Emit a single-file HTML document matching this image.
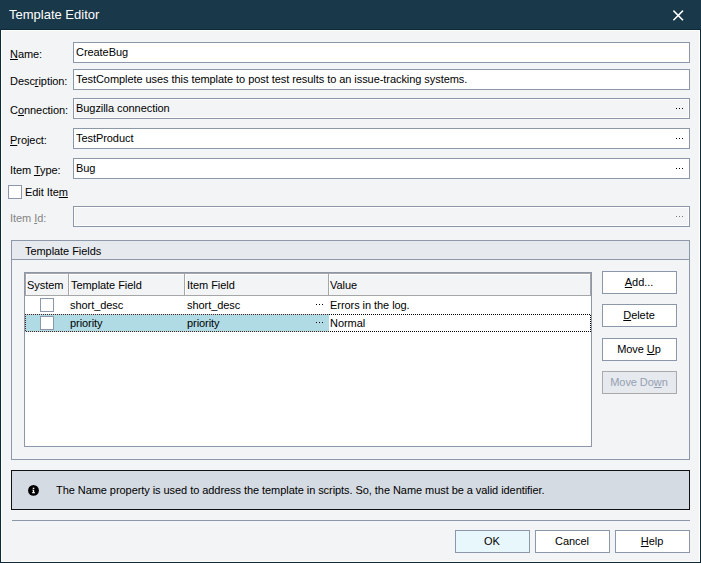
<!DOCTYPE html>
<html><head><meta charset="utf-8">
<style>
*{margin:0;padding:0;box-sizing:border-box}
html,body{width:701px;height:563px;overflow:hidden;background:#f3f4f6}
body{position:relative;font-family:"Liberation Sans",sans-serif;font-size:11px;color:#000;line-height:13px;letter-spacing:-0.06px}
.a{position:absolute;white-space:pre}
#title{position:absolute;left:0;top:0;width:701px;height:29px;background:#193849}
#tline{position:absolute;left:0;top:29px;width:701px;height:1px;background:#0d2a3c}
#fl{position:absolute;left:0;top:29px;width:1px;height:534px;background:#0d2a3c}
#fr{position:absolute;left:700px;top:29px;width:1px;height:534px;background:#0d2a3c}
#fb{position:absolute;left:0;top:562px;width:701px;height:1px;background:#0d2a3c}
#wl{position:absolute;left:1px;top:30px;width:1px;height:532px;background:#fff}
#wr{position:absolute;left:699px;top:30px;width:1px;height:532px;background:#fff}
#wt{position:absolute;left:1px;top:30px;width:699px;height:1px;background:#fff}
#wb{position:absolute;left:1px;top:561px;width:699px;height:1px;background:#fff}
.tb{position:absolute;left:73px;width:617px;height:21px;border:1px solid #8c97a9;background:#fff}
.ro{background:#f3f4f6;box-shadow:inset 0 0 0 1px #fff}
.dots{position:absolute;left:676px;width:7px;height:1px}
.dots i{position:absolute;top:0;width:1px;height:1px;background:#000}
u{text-decoration:underline;text-underline-offset:1px;text-decoration-thickness:1px;text-decoration-skip-ink:none}
.btn{position:absolute;width:75px;height:23px;border:1px solid #8c97a9;background:#fff;text-align:center;line-height:20px;padding-right:1px}
.cb{position:absolute;width:14px;height:14px;border:1px solid #8c97a9;background:#fff}
</style></head><body>
<div id="title"></div>
<div class="a" style="left:9px;top:7px;font-size:13px;letter-spacing:0;line-height:16px;color:#fff">Template Editor</div>
<svg style="position:absolute;left:672px;top:9px" width="12" height="12" viewBox="0 0 12 12"><path d="M1.4 1.6L11 11.2M11 1.6L1.4 11.2" stroke="#fff" stroke-width="1.5"/></svg>
<div id="tline"></div><div id="fl"></div><div id="fr"></div><div id="fb"></div>
<div id="wl"></div><div id="wr"></div><div id="wt"></div><div id="wb"></div>

<!-- form rows -->
<div class="a" style="left:10px;top:48px"><u>N</u>ame:</div>
<div class="tb" style="top:42px"></div>
<div class="a" style="left:76px;top:46px">CreateBug</div>

<div class="a" style="left:10px;top:75px">Desc<u>r</u>iption:</div>
<div class="tb" style="top:69px"></div>
<div class="a" style="left:76px;top:73px">TestComplete uses this template to post test results to an issue-tracking systems.</div>

<div class="a" style="left:10px;top:104px">C<u>o</u>nnection:</div>
<div class="tb ro" style="top:98px"></div>
<div class="a" style="left:76px;top:102px">Bugzilla connection</div>
<div class="dots" style="top:108px"><i style="left:0"></i><i style="left:3px"></i><i style="left:6px"></i></div>

<div class="a" style="left:10px;top:134px"><u>P</u>roject:</div>
<div class="tb" style="top:128px"></div>
<div class="a" style="left:76px;top:132px">TestProduct</div>
<div class="dots" style="top:138px"><i style="left:0"></i><i style="left:3px"></i><i style="left:6px"></i></div>

<div class="a" style="left:10px;top:164px">Item <u>T</u>ype:</div>
<div class="tb" style="top:158px"></div>
<div class="a" style="left:76px;top:162px">Bug</div>
<div class="dots" style="top:168px"><i style="left:0"></i><i style="left:3px"></i><i style="left:6px"></i></div>

<div class="cb" style="left:8px;top:185px"></div>
<div class="a" style="left:25px;top:186px">Edit Ite<u>m</u></div>

<div class="a" style="left:10px;top:212px;color:#858585">Item <u>I</u>d:</div>
<div class="tb ro" style="top:206px"></div>
<div class="dots" style="top:216px"><i style="left:0;background:#777"></i><i style="left:3px;background:#777"></i><i style="left:6px;background:#777"></i></div>


<!-- group box -->
<div style="position:absolute;left:11px;top:240px;width:679px;height:220px;border:1px solid #8c97a9;background:#f3f4f6"></div>
<div style="position:absolute;left:12px;top:241px;width:677px;height:18px;background:#e6e9ee;border-bottom:1px solid #8c97a9;box-sizing:content-box"></div>
<div class="a" style="left:25px;top:245px">Template Fields</div>

<!-- grid -->
<div style="position:absolute;left:24px;top:272px;width:568px;height:175px;border:1px solid #8c97a9;background:#fff"></div>
<div style="position:absolute;left:25px;top:273px;width:566px;height:23px;border:1px solid #a6a6a6;background:#f3f4f6;box-shadow:inset 1px 1px 0 #fff"></div>
<div style="position:absolute;left:68px;top:274px;width:1px;height:21px;background:#a6a6a6"></div>
<div style="position:absolute;left:69px;top:274px;width:1px;height:21px;background:#fff"></div>
<div style="position:absolute;left:184px;top:274px;width:1px;height:21px;background:#a6a6a6"></div>
<div style="position:absolute;left:185px;top:274px;width:1px;height:21px;background:#fff"></div>
<div style="position:absolute;left:328px;top:274px;width:1px;height:21px;background:#a6a6a6"></div>
<div style="position:absolute;left:329px;top:274px;width:1px;height:21px;background:#fff"></div>
<div class="a" style="left:27px;top:279px">System</div>
<div class="a" style="left:71px;top:279px">Template Field</div>
<div class="a" style="left:187px;top:279px">Item Field</div>
<div class="a" style="left:330px;top:279px">Value</div>

<div class="cb" style="left:40px;top:298px"></div>
<div class="a" style="left:70px;top:299px">short_desc</div>
<div class="a" style="left:187px;top:299px">short_desc</div>
<div style="position:absolute;left:316px;top:304px;width:1px;height:1px;background:#000"></div>
<div style="position:absolute;left:319px;top:304px;width:1px;height:1px;background:#000"></div>
<div style="position:absolute;left:322px;top:304px;width:1px;height:1px;background:#000"></div>
<div class="a" style="left:330px;top:299px">Errors in the log.</div>

<div style="position:absolute;left:25px;top:314px;width:304px;height:18px;background:#b0dbe4"></div>
<div class="cb" style="left:40px;top:316px"></div>
<div class="a" style="left:70px;top:317px">priority</div>
<div class="a" style="left:187px;top:317px">priority</div>
<div style="position:absolute;left:316px;top:322px;width:1px;height:1px;background:#000"></div>
<div style="position:absolute;left:319px;top:322px;width:1px;height:1px;background:#000"></div>
<div style="position:absolute;left:322px;top:322px;width:1px;height:1px;background:#000"></div>
<div class="a" style="left:330px;top:317px">Normal</div>

<svg style="position:absolute;left:0;top:0" width="701" height="563">
<defs>
<pattern id="pb" patternUnits="userSpaceOnUse" width="2" height="2"><rect x="1" y="0" width="1" height="1" fill="#4f241b"/><rect x="0" y="1" width="1" height="1" fill="#4f241b"/></pattern>
<pattern id="pk" patternUnits="userSpaceOnUse" width="2" height="2"><rect x="1" y="0" width="1" height="1" fill="#000"/><rect x="0" y="1" width="1" height="1" fill="#000"/></pattern>
</defs>
<rect x="25" y="314" width="304" height="1" fill="url(#pb)"/>
<rect x="25" y="331" width="304" height="1" fill="url(#pb)"/>
<rect x="25" y="314" width="1" height="18" fill="url(#pb)"/>
<rect x="329" y="314" width="262" height="1" fill="url(#pk)"/>
<rect x="329" y="331" width="262" height="1" fill="url(#pk)"/>
<rect x="590" y="314" width="1" height="18" fill="url(#pk)"/>
</svg>

<!-- side buttons -->
<div class="btn" style="left:602px;top:271px"><u>A</u>dd...</div>
<div class="btn" style="left:602px;top:304px"><u>D</u>elete</div>
<div class="btn" style="left:602px;top:338px">Move <u>U</u>p</div>
<div class="btn" style="left:602px;top:371px;background:#e6e9ed;border-color:#a9a9a9;color:#94a0b3">Move Do<u>w</u>n</div>

<!-- info -->
<div style="position:absolute;left:11px;top:470px;width:679px;height:40px;border:1px solid #111;background:#d5dbe2"></div>
<svg style="position:absolute;left:28px;top:485px" width="11" height="11" viewBox="0 0 11 11"><circle cx="5.5" cy="5.4" r="5.4" fill="#000"/><rect x="4.8" y="2.7" width="1.5" height="1.3" fill="#fff"/><path d="M4.2 4.8H6.2V7.3H7V8.3H4V7.3H4.9V5.6H4.2Z" fill="#fff"/></svg>
<div class="a" style="left:56px;top:484px">The Name property is used to address the template in scripts. So, the Name must be a valid identifier.</div>

<div style="position:absolute;left:12px;top:520px;width:678px;height:1px;background:#8c97a9"></div>

<div class="btn" style="left:455px;top:530px;background:#e8f7fc">OK</div>
<div class="btn" style="left:535px;top:530px">Cancel</div>
<div class="btn" style="left:615px;top:530px"><u>H</u>elp</div>
</body></html>
